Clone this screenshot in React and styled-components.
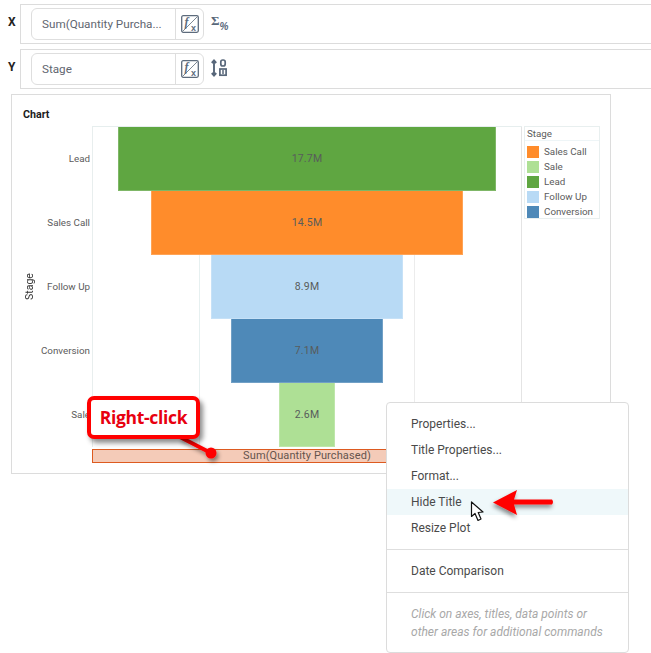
import React from "react";
import styled, { createGlobalStyle } from "styled-components";

const Global = createGlobalStyle`
  html, body { margin: 0; padding: 0; background: #fff; }
  body { font-family: Roboto, "Liberation Sans", sans-serif; }
`;

const Page = styled.div`
  position: relative;
  width: 651px;
  height: 653px;
  overflow: hidden;
  padding: 4px 0 0 8px;
  box-sizing: border-box;
  display: flex;
  flex-direction: column;
  gap: 5px;
`;

const BindingLine = styled.div`
  display: flex;
  align-items: flex-start;
`;

const AxisLetter = styled.div`
  width: 12px;
  font-size: 12px;
  font-weight: 700;
  line-height: 14px;
  padding-top: 11px;
  color: #222;
`;

const BindingRow = styled.div`
  flex: 1;
  height: 40px;
  box-sizing: border-box;
  border: 1px solid #dcdcdc;
  border-right: none;
  padding: 3px 0 0 10px;
  display: flex;
  gap: 7px;
`;

const FieldBox = styled.div`
  width: 173px;
  height: 32px;
  box-sizing: border-box;
  border: 1px solid #dedede;
  border-radius: 6px;
  display: flex;
`;

const FieldText = styled.div`
  flex: 1;
  padding-left: 10px;
  font-size: 11.7px;
  line-height: 30px;
  color: #5f6670;
`;

const FieldButton = styled.div`
  width: 27px;
  border-left: 1px solid #dedede;
  display: flex;
  align-items: center;
  justify-content: center;
`;

const SideIcon = styled.div`
  height: 30px;
  display: flex;
  align-items: center;
`;

const SigmaGlyph = styled.span`
  font-family: "Liberation Serif", serif;
  font-size: 13px;
  font-weight: 700;
  color: #58677a;
  line-height: 12px;
  margin-top: -5px;
`;

const PercentGlyph = styled.span`
  font-family: "Liberation Sans", sans-serif;
  font-size: 10px;
  font-weight: 700;
  font-style: italic;
  color: #58677a;
  line-height: 10px;
  margin: 7px 0 0 0;
`;

const ChartPanel = styled.div`
  margin: 0 0 0 3px;
  width: 600px;
  height: 380px;
  box-sizing: border-box;
  border: 1px solid #dcdcdc;
  padding: 13px 0 0 12px;
`;

const ChartTitle = styled.div`
  font-size: 10.7px;
  font-weight: 700;
  line-height: 14px;
  color: #1c1c1c;
  margin: 0 0 4px -1px;
`;

const ChartBody = styled.div`
  display: grid;
  grid-template-columns: 12px 52px 430px 76px;
  column-gap: 2px;
  grid-template-rows: 321px 14px;
  row-gap: 2px;
`;

const StageAxis = styled.div`
  grid-row: 1;
  writing-mode: vertical-rl;
  transform: rotate(180deg);
  text-align: center;
  font-size: 10.5px;
  line-height: 12px;
  color: #333;
`;

const CategoryAxis = styled.div`
  margin-left: -2px;
  padding-top: 1px;
  display: grid;
  grid-auto-rows: 64px;
`;

const Category = styled.div`
  font-size: 9.8px;
  color: #5c5c5c;
  text-align: right;
  align-self: center;
  margin-top: -1px;
`;

const Plot = styled.div`
  border-top: 1px solid #e6eeee;
  display: flex;
  flex-direction: column;
  align-items: center;
  background-repeat: no-repeat;
  background-size: 1px 100%;
  background-image:
    linear-gradient(#e8eeee, #e8eeee),
    linear-gradient(#e6f0f0, #e6f0f0),
    linear-gradient(#ececec, #ececec),
    linear-gradient(#e4e4e4, #e4e4e4);
  background-position: 0 0, 107px 0, 322px 0, 429px 0;
`;

const Bar = styled.div`
  height: 64px;
  width: ${(p) => p.$w}px;
  flex: none;
  box-sizing: border-box;
  background: ${(p) => p.$c};
  border: 1px solid rgba(255, 255, 255, 0.2);
  border-top: none;
  display: flex;
  align-items: center;
  justify-content: center;
  font-size: 10.5px;
  color: #585c5c;
  letter-spacing: 0.2px;
`;

const Legend = styled.div`
  height: 93px;
  box-sizing: border-box;
  border: 1px solid #e8efef;
  color: #5c5c5c;
  font-size: 9.8px;
`;

const LegendTitle = styled.div`
  height: 13px;
  line-height: 13px;
  padding-left: 2px;
  border-bottom: 1px solid #eef5f7;
  margin-bottom: 3px;
`;

const LegendItem = styled.div`
  display: flex;
  align-items: center;
  gap: 5px;
  height: 15px;
  padding-left: 2px;
  white-space: nowrap;
`;

const Swatch = styled.span`
  width: 12px;
  height: 12px;
  background: ${(p) => p.$c};
`;

const XTitle = styled.div`
  grid-column: 3;
  grid-row: 2;
  box-sizing: border-box;
  background: #f4cbb8;
  border: 1px solid #dd5a20;
  font-size: 11px;
  line-height: 12px;
  text-align: center;
  color: #65544d;
  letter-spacing: 0.1px;
`;

const Menu = styled.div`
  position: absolute;
  left: 386px;
  top: 402px;
  width: 243px;
  height: 251px;
  box-sizing: border-box;
  background: #fff;
  border: 1px solid #dcdcdc;
  border-radius: 4px;
  padding-top: 8px;
  font-size: 12px;
  color: #4a4a4a;
`;

const MenuItem = styled.div`
  height: 26px;
  line-height: 26px;
  padding-left: 24px;
  background: ${(p) => (p.$active ? "#eff8fa" : "transparent")};
`;

const MenuRule = styled.div`
  height: 1px;
  background: #dedede;
  margin: ${(p) => p.$m};
`;

const MenuHint = styled.div`
  padding-left: 24px;
  font-style: italic;
  line-height: 18px;
  color: #a8a8a8;
`;

const Callout = styled.div`
  position: absolute;
  left: 87px;
  top: 396px;
  width: 113px;
  height: 43px;
  box-sizing: border-box;
  background: #fff;
  border: 4px solid #ff0000;
  border-radius: 7px;
  box-shadow: 3px 4px 5px rgba(0, 0, 0, 0.45);
  color: #e8000f;
  font-family: "Open Sans", sans-serif;
  font-size: 17.5px;
  font-weight: 700;
  line-height: 34px;
  text-align: center;
  letter-spacing: -0.3px;
`;

const Overlay = styled.svg`
  position: absolute;
  left: ${(p) => p.$x}px;
  top: ${(p) => p.$y}px;
  overflow: visible;
`;

const FxIcon = () => (
  <svg width="18" height="18" viewBox="0 0 18 18">
    <rect x="0.7" y="0.7" width="16.6" height="16.6" rx="1.5" fill="#fff" stroke="#5d6b7c" strokeWidth="1.3" />
    <path d="M1 17 L17 1" stroke="#7d8894" strokeWidth="1" />
    <text x="3.5" y="10.5" fontFamily="Liberation Serif, serif" fontStyle="italic" fontWeight="700" fontSize="12" fill="#5d6b7c">f</text>
    <text x="10" y="15.5" fontFamily="Liberation Sans, sans-serif" fontWeight="700" fontSize="9" fill="#5d6b7c">x</text>
  </svg>
);

const SortIcon = () => (
  <svg width="16" height="18" viewBox="0 0 16 18">
    <path d="M3 1.5 L3 16.5 M0.8 4 L3 1.5 L5.2 4 M0.8 14 L3 16.5 L5.2 14" fill="none" stroke="#58677a" strokeWidth="1.9" />
    <rect x="9.8" y="1" width="4.4" height="6" rx="2" fill="none" stroke="#58677a" strokeWidth="1.7" />
    <rect x="8.9" y="10" width="6.2" height="6.2" fill="none" stroke="#58677a" strokeWidth="1.7" />
    <path d="M12 11 V15" stroke="#58677a" strokeWidth="1.5" />
  </svg>
);

const funnel = [
  { n: "Lead", v: "17.7M", w: 378, c: "#5fa641" },
  { n: "Sales Call", v: "14.5M", w: 312, c: "#ff8c2b" },
  { n: "Follow Up", v: "8.9M", w: 192, c: "#b8daf5" },
  { n: "Conversion", v: "7.1M", w: 152, c: "#4e89b8" },
  { n: "Sale", v: "2.6M", w: 56, c: "#aee095" },
];

const legend = ["Sales Call", "Sale", "Lead", "Follow Up", "Conversion"].map((n) => funnel.find((f) => f.n === n));

export default function App() {
  return (
    <>
      <Global />
      <Page>
        <BindingLine>
          <AxisLetter>X</AxisLetter>
          <BindingRow>
            <FieldBox>
              <FieldText>Sum(Quantity Purcha...</FieldText>
              <FieldButton><FxIcon /></FieldButton>
            </FieldBox>
            <SideIcon><SigmaGlyph>Σ</SigmaGlyph><PercentGlyph>%</PercentGlyph></SideIcon>
          </BindingRow>
        </BindingLine>
        <BindingLine>
          <AxisLetter>Y</AxisLetter>
          <BindingRow>
            <FieldBox>
              <FieldText>Stage</FieldText>
              <FieldButton><FxIcon /></FieldButton>
            </FieldBox>
            <SideIcon><SortIcon /></SideIcon>
          </BindingRow>
        </BindingLine>

        <ChartPanel>
          <ChartTitle>Chart</ChartTitle>
          <ChartBody>
            <StageAxis>Stage</StageAxis>
            <CategoryAxis>
              {funnel.map((f) => <Category key={f.n}>{f.n}</Category>)}
            </CategoryAxis>
            <Plot>
              {funnel.map((f) => <Bar key={f.n} $w={f.w} $c={f.c}>{f.v}</Bar>)}
            </Plot>
            <Legend>
              <LegendTitle>Stage</LegendTitle>
              {legend.map((f) => (
                <LegendItem key={f.n}><Swatch $c={f.c} />{f.n}</LegendItem>
              ))}
            </Legend>
            <XTitle>Sum(Quantity Purchased)</XTitle>
          </ChartBody>
        </ChartPanel>

        <Overlay $x={170} $y={430} width="60" height="35">
          <defs>
            <filter id="s1" x="-30%" y="-30%" width="170%" height="180%">
              <feDropShadow dx="2" dy="3" stdDeviation="2" floodColor="#000" floodOpacity="0.45" />
            </filter>
          </defs>
          <g filter="url(#s1)">
            <path d="M10 7 L41 23" stroke="#ff0000" strokeWidth="4" />
            <circle cx="41" cy="23" r="5.5" fill="#ff0000" />
          </g>
        </Overlay>
        <Callout>Right-click</Callout>

        <Menu>
          <MenuItem>Properties...</MenuItem>
          <MenuItem>Title Properties...</MenuItem>
          <MenuItem>Format...</MenuItem>
          <MenuItem $active>Hide Title</MenuItem>
          <MenuItem>Resize Plot</MenuItem>
          <MenuRule $m="8px 0 8px" />
          <MenuItem>Date Comparison</MenuItem>
          <MenuRule $m="8px 0 12px" />
          <MenuHint>Click on axes, titles, data points or<br />other areas for additional commands</MenuHint>
        </Menu>

        <Overlay $x={470} $y={501} width="16" height="22" viewBox="0 0 16 22">
          <path d="M1.5 1 L1.5 15.5 L5 12.5 L8 19.5 L11 18 L8.2 11.5 L13 11 Z" fill="#fff" stroke="#111" strokeWidth="1.2" strokeLinejoin="round" />
        </Overlay>

        <Overlay $x={490} $y={485} width="70" height="36">
          <defs>
            <filter id="s2" x="-20%" y="-30%" width="140%" height="180%">
              <feDropShadow dx="-1" dy="3" stdDeviation="2" floodColor="#000" floodOpacity="0.45" />
            </filter>
          </defs>
          <path d="M3 17.5 L27 5 L24 14.5 L62 14.5 Q64 17 62 19.5 L24 19.5 L27 30 Z" fill="#ff0000" filter="url(#s2)" />
        </Overlay>
      </Page>
    </>
  );
}
